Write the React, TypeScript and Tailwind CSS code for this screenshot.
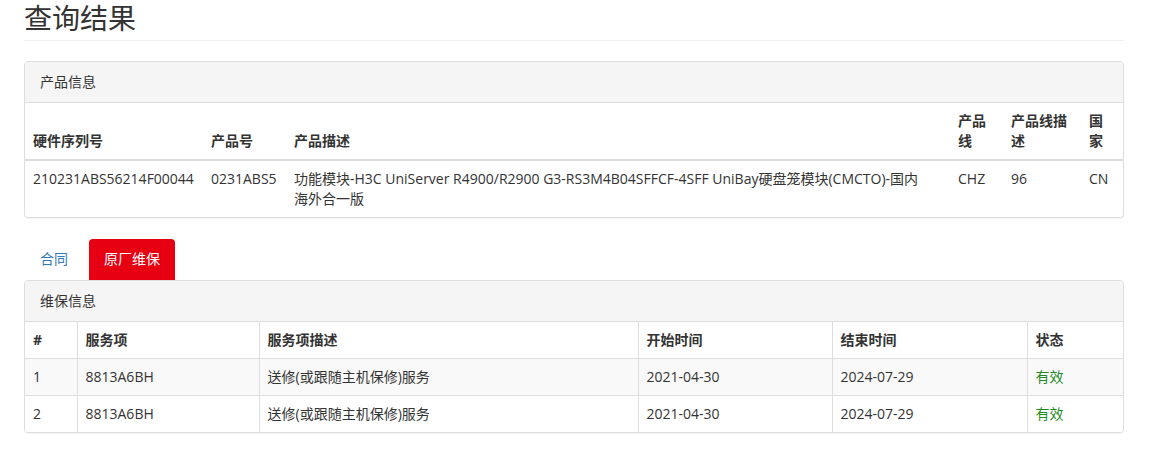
const font = { fontFamily: '"Open Sans", "Noto Sans CJK SC", sans-serif' };

const product = {
  serial: "210231ABS56214F00044",
  code: "0231ABS5",
  line1: "功能模块-H3C UniServer R4900/R2900 G3-RS3M4B04SFFCF-4SFF UniBay硬盘笼模块(CMCTO)-国内",
  line2: "海外合一版",
  productLine: "CHZ",
  lineDesc: "96",
  country: "CN",
};

const warranty = [
  { id: 1, item: "8813A6BH", desc: "送修(或跟随主机保修)服务", start: "2021-04-30", end: "2024-07-29", status: "有效" },
  { id: 2, item: "8813A6BH", desc: "送修(或跟随主机保修)服务", start: "2021-04-30", end: "2024-07-29", status: "有效" },
];

function PanelHeading({ title }: { title: string }) {
  return (
    <div className="h-[41px] border-b border-[#ddd] bg-[#f5f5f5] px-[15px] py-[10px] leading-5">
      {title}
    </div>
  );
}

export default function App() {
  return (
    <div className="min-h-[458px] bg-white text-[14px] leading-5 text-[#333]" style={font}>
      <div className="w-[1124px] pl-6">
        <h1 className="border-b border-[#eee] pb-[4px] text-[28px] font-normal leading-9 text-[#333]">
          查询结果
        </h1>

        <div className="mt-5 overflow-hidden rounded border border-[#ddd] shadow-[0_1px_1px_rgba(0,0,0,0.05)]">
          <PanelHeading title="产品信息" />
          <table className="w-full table-fixed border-collapse">
            <colgroup>
              <col className="w-[178px]" />
              <col className="w-[83px]" />
              <col className="w-[664px]" />
              <col className="w-[53px]" />
              <col className="w-[78px]" />
              <col />
            </colgroup>
            <thead>
              <tr className="border-b-2 border-[#ddd] text-left align-bottom font-bold">
                <th className="p-2">硬件序列号</th>
                <th className="p-2">产品号</th>
                <th className="p-2">产品描述</th>
                <th className="p-2">产品线</th>
                <th className="p-2">产品线描述</th>
                <th className="p-2">国家</th>
              </tr>
            </thead>
            <tbody>
              <tr className="align-top">
                <td className="p-2">{product.serial}</td>
                <td className="p-2">{product.code}</td>
                <td className="p-2">
                  <span className="whitespace-nowrap">{product.line1}</span>
                  <br />
                  {product.line2}
                </td>
                <td className="p-2">{product.productLine}</td>
                <td className="p-2">{product.lineDesc}</td>
                <td className="p-2">{product.country}</td>
              </tr>
            </tbody>
          </table>
        </div>

        <div className="mt-[21px] flex h-[41px] items-stretch pl-px">
          <a className="px-[15px] py-[10px] text-[#337ab7]" href="#">
            合同
          </a>
          <a className="ml-[6px] rounded-t bg-[#e60012] px-[15px] py-[10px] text-white" href="#">
            原厂维保
          </a>
        </div>

        <div className="overflow-hidden rounded border border-[#ddd] shadow-[0_1px_1px_rgba(0,0,0,0.05)]">
          <PanelHeading title="维保信息" />
          <table className="w-full table-fixed border-collapse">
            <colgroup>
              <col className="w-[52px]" />
              <col className="w-[182px]" />
              <col className="w-[379px]" />
              <col className="w-[194px]" />
              <col className="w-[195px]" />
              <col />
            </colgroup>
            <thead>
              <tr className="text-left font-bold">
                {["#", "服务项", "服务项描述", "开始时间", "结束时间", "状态"].map((h, i) => (
                  <th key={h} className={`border-[#ddd] p-2 ${i > 0 ? "border-l" : ""}`}>
                    {h}
                  </th>
                ))}
              </tr>
            </thead>
            <tbody>
              {warranty.map((w, r) => (
                <tr key={w.id} className={`border-t border-[#ddd] ${r % 2 === 0 ? "bg-[#f9f9f9]" : "bg-white"}`}>
                  <td className="p-2">{w.id}</td>
                  <td className="border-l border-[#ddd] p-2">{w.item}</td>
                  <td className="border-l border-[#ddd] p-2">{w.desc}</td>
                  <td className="border-l border-[#ddd] p-2">{w.start}</td>
                  <td className="border-l border-[#ddd] p-2">{w.end}</td>
                  <td className="border-l border-[#ddd] p-2 text-[#1f8a1f]">{w.status}</td>
                </tr>
              ))}
            </tbody>
          </table>
        </div>
      </div>
    </div>
  );
}
